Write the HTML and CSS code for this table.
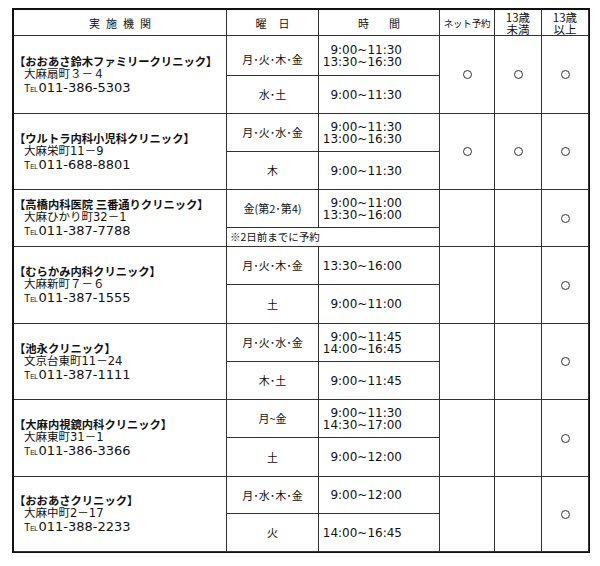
FILE: index.html
```html
<!DOCTYPE html>
<html lang="ja">
<head>
<meta charset="utf-8">
<title>実施機関一覧</title>
<link rel="stylesheet" href="styles.css">
</head>
<body>
<div class="sheet">
  <div class="c h h1">実施機関</div>
  <div class="c h h2">曜日</div>
  <div class="c h h3">時間</div>
  <div class="c h h4">ネット予約</div>
  <div class="c h h5">13歳<br>未満</div>
  <div class="c h h5">13歳<br>以上</div>

  <!-- 1 -->
  <div class="c name r2"><b>【おおあさ鈴木ファミリークリニック】</b><span class="ad">大麻扇町３－４</span><span class="tel"><span class="tm">T<small>EL</small></span>011-386-5303</span></div>
  <div class="c day d1">月･火･木･金</div>
  <div class="c time"><div class="tt">9:00~11:30<br>13:30~16:30</div></div>
  <div class="c mark r2"><i class="o"></i></div>
  <div class="c mark r2"><i class="o"></i></div>
  <div class="c mark r2"><i class="o"></i></div>
  <div class="c day">水･土</div>
  <div class="c time"><div class="tt">9:00~11:30</div></div>

  <!-- 2 -->
  <div class="c name r2"><b>【ウルトラ内科小児科クリニック】</b><span class="ad">大麻栄町11－9</span><span class="tel"><span class="tm">T<small>EL</small></span>011-688-8801</span></div>
  <div class="c day">月･火･水･金</div>
  <div class="c time"><div class="tt">9:00~11:30<br>13:00~16:30</div></div>
  <div class="c mark r2"><i class="o"></i></div>
  <div class="c mark r2"><i class="o"></i></div>
  <div class="c mark r2"><i class="o"></i></div>
  <div class="c day">木</div>
  <div class="c time"><div class="tt">9:00~11:30</div></div>

  <!-- 3 -->
  <div class="c name r2"><b>【高橋内科医院 三番通りクリニック】</b><span class="ad">大麻ひかり町32－1</span><span class="tel"><span class="tm">T<small>EL</small></span>011-387-7788</span></div>
  <div class="c day">金(第2･第4)</div>
  <div class="c time"><div class="tt">9:00~11:00<br>13:30~16:00</div></div>
  <div class="c mark r2"></div>
  <div class="c mark r2"></div>
  <div class="c mark r2"><i class="o"></i></div>
  <div class="c note">※2日前までに予約</div>

  <!-- 4 -->
  <div class="c name r2"><b>【むらかみ内科クリニック】</b><span class="ad">大麻新町７－６</span><span class="tel"><span class="tm">T<small>EL</small></span>011-387-1555</span></div>
  <div class="c day">月･火･木･金</div>
  <div class="c time"><div class="tt">13:30~16:00</div></div>
  <div class="c mark r2"></div>
  <div class="c mark r2"></div>
  <div class="c mark r2"><i class="o"></i></div>
  <div class="c day">土</div>
  <div class="c time"><div class="tt">9:00~11:00</div></div>

  <!-- 5 -->
  <div class="c name r2"><b>【池永クリニック】</b><span class="ad">文京台東町11－24</span><span class="tel"><span class="tm">T<small>EL</small></span>011-387-1111</span></div>
  <div class="c day">月･火･水･金</div>
  <div class="c time"><div class="tt">9:00~11:45<br>14:00~16:45</div></div>
  <div class="c mark r2"></div>
  <div class="c mark r2"></div>
  <div class="c mark r2"><i class="o"></i></div>
  <div class="c day">木･土</div>
  <div class="c time"><div class="tt">9:00~11:45</div></div>

  <!-- 6 -->
  <div class="c name r2"><b>【大麻内視鏡内科クリニック】</b><span class="ad">大麻東町31－1</span><span class="tel"><span class="tm">T<small>EL</small></span>011-386-3366</span></div>
  <div class="c day">月~金</div>
  <div class="c time"><div class="tt">9:00~11:30<br>14:30~17:00</div></div>
  <div class="c mark r2"></div>
  <div class="c mark r2"></div>
  <div class="c mark r2"><i class="o"></i></div>
  <div class="c day">土</div>
  <div class="c time"><div class="tt">9:00~12:00</div></div>

  <!-- 7 -->
  <div class="c name r2"><b>【おおあさクリニック】</b><span class="ad">大麻中町2－17</span><span class="tel"><span class="tm">T<small>EL</small></span>011-388-2233</span></div>
  <div class="c day">月･水･木･金</div>
  <div class="c time"><div class="tt">9:00~12:00</div></div>
  <div class="c mark r2"></div>
  <div class="c mark r2"></div>
  <div class="c mark r2"><i class="o"></i></div>
  <div class="c day">火</div>
  <div class="c time"><div class="tt">14:00~16:45</div></div>
</div>
</body>
</html>
```
FILE: styles.css
```css
html, body {
  margin: 0;
  padding: 0;
  background: #fff;
}
body {
  padding: 8px 0 0 12px;
  font-family: "DejaVu Sans", "Noto Sans CJK JP", sans-serif;
  color: #111;
}
.sheet {
  width: 575px;
  display: grid;
  grid-template-columns: 213px 92px 121px 55px 47px 47px;
  grid-template-rows: 26px 40px 38px 38px 38px 38px 19px 38px 39px 38px 38px 38px 39px 37px 38px;
  border-style: solid;
  border-color: #111;
  border-width: 2px 1px 1px 2px;
}
.c {
  border-right: 1px solid #333;
  border-bottom: 1px solid #333;
  display: flex;
  align-items: center;
  justify-content: center;
  box-sizing: border-box;
  min-width: 0;
  overflow: hidden;
}
.r2 { grid-row: span 2; }

.h {
  font-family: "Noto Sans CJK JP", sans-serif;
  font-size: 11px;
  line-height: 12px;
  text-align: center;
}
.h1 { letter-spacing: 6px; padding-left: 6px; }
.h2 { letter-spacing: 12px; padding-left: 12px; }
.h3 { letter-spacing: 20px; padding-left: 20px; }
.h4 { font-size: 9.5px; letter-spacing: -0.2px; }
.h5 { font-size: 11.5px; line-height: 12px; }

.name {
  flex-direction: column;
  align-items: flex-start;
  justify-content: center;
  padding-left: 0;
  padding-top: 1px;
}
.name b {
  font-family: "Noto Sans CJK JP", sans-serif;
  font-weight: 700;
  font-size: 11.3px;
  line-height: 13px;
  white-space: nowrap;
}
.ad {
  font-size: 11.5px;
  line-height: 13px;
  padding-left: 10px;
  white-space: nowrap;
}
.tel {
  font-size: 13px;
  line-height: 13px;
  padding-left: 10px;
  white-space: nowrap;
}
.tm {
  font-family: "Liberation Sans", sans-serif;
  font-size: 10.5px;
  letter-spacing: -0.3px;
  margin-right: 1px;
}
.tm small {
  font-size: 6.5px;
}

.day {
  font-family: "Noto Sans CJK JP", sans-serif;
  font-size: 11px;
  line-height: 13px;
  white-space: nowrap;
}
.d1 { padding-top: 8px; }

.time {
  justify-content: flex-start;
  padding-left: 3px;
  font-size: 12px;
  line-height: 12px;
}
.tt {
  width: 80px;
  text-align: right;
  white-space: nowrap;
}

.note {
  grid-column: span 2;
  justify-content: flex-start;
  padding-left: 3px;
  font-family: "Noto Sans CJK JP", sans-serif;
  font-size: 10.5px;
  line-height: 12px;
  white-space: nowrap;
}

.mark .o {
  display: block;
  width: 9px;
  height: 9px;
  box-sizing: border-box;
  border: 1px solid #333;
  border-radius: 50%;
}
```
